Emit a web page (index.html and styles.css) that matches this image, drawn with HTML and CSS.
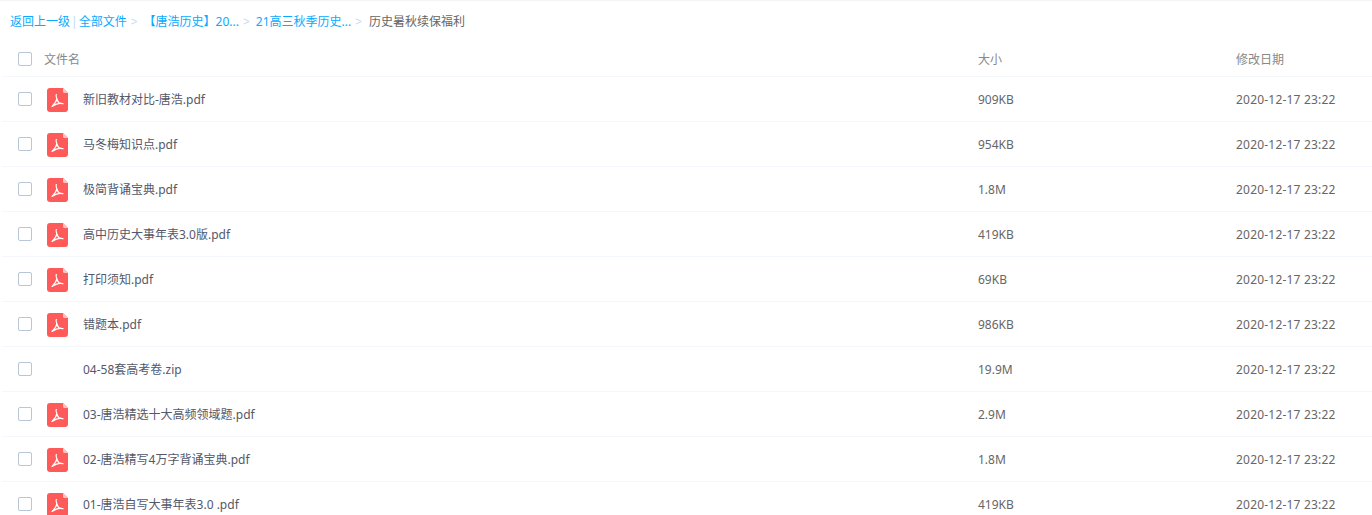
FILE: index.html
```html
<!DOCTYPE html>
<html lang="zh">

<head>
    <meta charset="UTF-8" />
    <title>全部文件</title>
    <link rel="stylesheet" href="styles.css">
</head>

<body>
    <svg class="defs" width="0" height="0" aria-hidden="true">
        <symbol id="pdf" viewBox="0 0 21 24">
            <path d="M3 0H16L21 5V21a3 3 0 0 1-3 3H3a3 3 0 0 1-3-3V3a3 3 0 0 1 3-3Z" fill="#ff5a5a" />
            <path d="M16 0L21 5H17.5a1.5 1.5 0 0 1-1.5-1.5Z" fill="#ffc4c4" />
            <path d="M9.5 6.5C8.9 6.5 9 8 9.7 10.5C10.3 12.6 11.1 14 12.5 15.2C13.7 15.6 15 15.6 16 15.7M9.9 10.5C9.5 13 8.1 15.6 5 18.4M5 18.4C7.5 16.6 10.5 15.3 14 15.1" fill="none" stroke="#fff" stroke-width="1.2" stroke-linecap="round" />
        </symbol>
    </svg>

    <div class="crumbs">
        <a href="#">返回上一级</a><span class="pipe">|</span><a href="#">全部文件</a>
        <span class="sep">&gt;</span>
        <a href="#">【唐浩历史】20...</a>
        <span class="sep">&gt;</span>
        <a href="#">21高三秋季历史...</a>
        <span class="sep">&gt;</span>
        <span class="current">历史暑秋续保福利</span>
    </div>

    <div class="list">
        <div class="row head">
            <span class="check"></span>
            <span class="name">文件名</span>
            <span class="size">大小</span>
            <span class="date">修改日期</span>
        </div>
        <div class="row">
            <span class="check"></span>
            <svg class="icon"><use href="#pdf" /></svg>
            <span class="name">新旧教材对比-唐浩.pdf</span>
            <span class="size">909KB</span>
            <span class="date">2020-12-17 23:22</span>
        </div>
        <div class="row">
            <span class="check"></span>
            <svg class="icon"><use href="#pdf" /></svg>
            <span class="name">马冬梅知识点.pdf</span>
            <span class="size">954KB</span>
            <span class="date">2020-12-17 23:22</span>
        </div>
        <div class="row">
            <span class="check"></span>
            <svg class="icon"><use href="#pdf" /></svg>
            <span class="name">极简背诵宝典.pdf</span>
            <span class="size">1.8M</span>
            <span class="date">2020-12-17 23:22</span>
        </div>
        <div class="row">
            <span class="check"></span>
            <svg class="icon"><use href="#pdf" /></svg>
            <span class="name">高中历史大事年表3.0版.pdf</span>
            <span class="size">419KB</span>
            <span class="date">2020-12-17 23:22</span>
        </div>
        <div class="row">
            <span class="check"></span>
            <svg class="icon"><use href="#pdf" /></svg>
            <span class="name">打印须知.pdf</span>
            <span class="size">69KB</span>
            <span class="date">2020-12-17 23:22</span>
        </div>
        <div class="row">
            <span class="check"></span>
            <svg class="icon"><use href="#pdf" /></svg>
            <span class="name">错题本.pdf</span>
            <span class="size">986KB</span>
            <span class="date">2020-12-17 23:22</span>
        </div>
        <div class="row">
            <span class="check"></span>
            <span class="icon"></span>
            <span class="name">04-58套高考卷.zip</span>
            <span class="size">19.9M</span>
            <span class="date">2020-12-17 23:22</span>
        </div>
        <div class="row">
            <span class="check"></span>
            <svg class="icon"><use href="#pdf" /></svg>
            <span class="name">03-唐浩精选十大高频领域题.pdf</span>
            <span class="size">2.9M</span>
            <span class="date">2020-12-17 23:22</span>
        </div>
        <div class="row">
            <span class="check"></span>
            <svg class="icon"><use href="#pdf" /></svg>
            <span class="name">02-唐浩精写4万字背诵宝典.pdf</span>
            <span class="size">1.8M</span>
            <span class="date">2020-12-17 23:22</span>
        </div>
        <div class="row">
            <span class="check"></span>
            <svg class="icon"><use href="#pdf" /></svg>
            <span class="name">01-唐浩自写大事年表3.0 .pdf</span>
            <span class="size">419KB</span>
            <span class="date">2020-12-17 23:22</span>
        </div>
    </div>
</body>

</html>
```

FILE: styles.css
```css
html,
body {
    height: 515px;
    overflow: hidden;
}

body {
    margin: 0;
    background-color: #fff;
    color: #53586a;
    font-family: "Noto Sans", "Noto Sans CJK SC", sans-serif;
    font-size: 12px;
    line-height: 16px;
    border-top: 1px solid #f4f4f4;
}

.defs {
    position: absolute;
}

.crumbs {
    display: flex;
    align-items: center;
    height: 37px;
    padding: 2px 0 0 10px;
    white-space: pre;
}

.crumbs a {
    color: #09aaff;
    text-decoration: none;
}

.pipe {
    margin: 0 1px;
    color: #c4d8f4;
}

.sep {
    margin: 0 6px 0 4px;
    color: #c4d8f4;
}

.current {
    margin-left: 1px;
    color: #666;
}

.list {
    padding-left: 2px;
}

.row {
    display: flex;
    align-items: center;
    height: 44px;
    border-bottom: 1px solid #f4f7fb;
}

.row.head {
    height: 34px;
    padding-top: 2px;
    color: #888;
}

.check {
    flex: none;
    width: 12px;
    height: 12px;
    margin-left: 16px;
    border: 1px solid #b8c6d8;
    border-radius: 2px;
}

.icon {
    flex: none;
    width: 21px;
    height: 24px;
    margin: 2px 0 0 15px;
}

.name,
.size,
.date {
    flex: none;
    padding-top: 2px;
}

.name {
    width: 895px;
    margin-left: 15px;
}

.head .name {
    width: 934px;
    margin-left: 12px;
}

.size {
    width: 258px;
    color: #666;
}

.date {
    color: #666;
    letter-spacing: 0.2px;
}

.head .size,
.head .date {
    color: #888;
    letter-spacing: 0;
}
```
